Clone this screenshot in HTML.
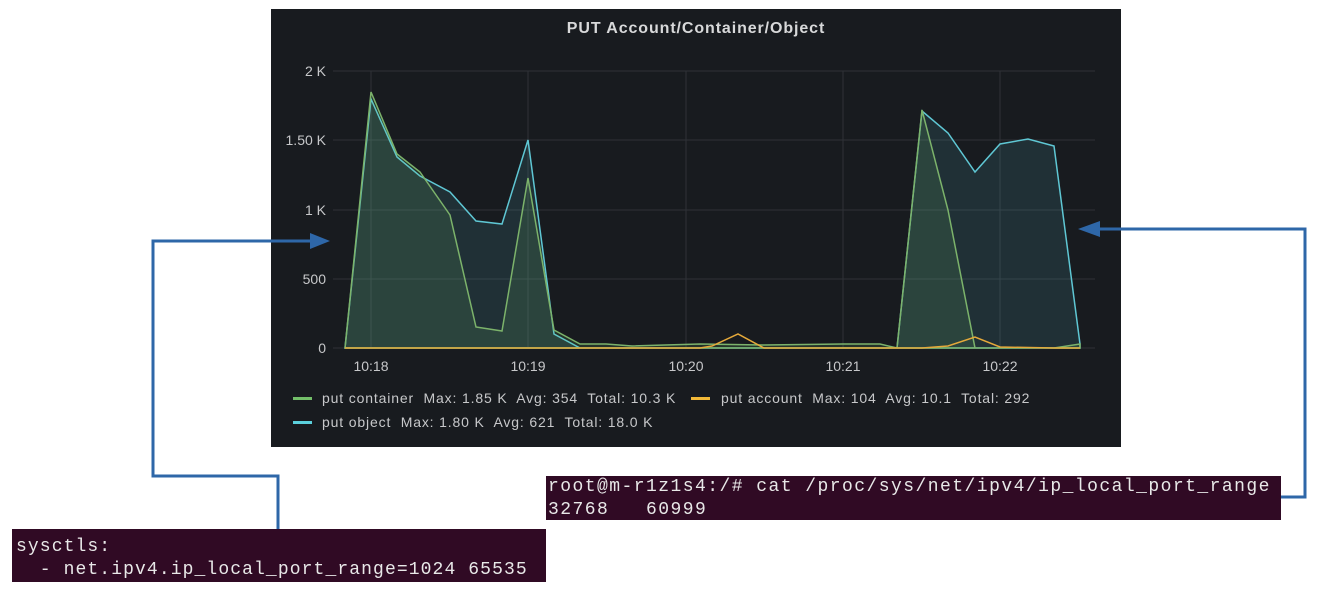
<!DOCTYPE html>
<html><head><meta charset="utf-8"><style>
body{margin:0;width:1326px;height:594px;background:#fff;position:relative;overflow:hidden;font-family:"Liberation Sans",sans-serif}
.term{position:absolute;background:#300a24;color:#e8e8e8;font-family:"Liberation Mono",monospace;font-size:18px;line-height:23px;white-space:pre}
</style></head><body>
<svg width="1326" height="594" style="position:absolute;left:0;top:0">
<rect x="271" y="9" width="850" height="438" fill="#181b1f"/>
<text x="696" y="33" fill="#d8d9da" font-size="16" font-weight="bold" letter-spacing="0.9" text-anchor="middle" font-family="Liberation Sans">PUT Account/Container/Object</text>
<g stroke="#2f3237" stroke-width="1">
<line x1="333" y1="71" x2="1095" y2="71"/><line x1="333" y1="140" x2="1095" y2="140"/><line x1="333" y1="210" x2="1095" y2="210"/><line x1="333" y1="279" x2="1095" y2="279"/><line x1="333" y1="348" x2="1095" y2="348"/>
<line x1="371" y1="71" x2="371" y2="348"/><line x1="528" y1="71" x2="528" y2="348"/><line x1="686" y1="71" x2="686" y2="348"/><line x1="843" y1="71" x2="843" y2="348"/><line x1="1000" y1="71" x2="1000" y2="348"/>
</g>
<g fill="#c7c8ca" font-size="14" text-anchor="end" font-family="Liberation Sans">
<text x="326" y="76">2 K</text><text x="326" y="145">1.50 K</text><text x="326" y="215">1 K</text><text x="326" y="284">500</text><text x="326" y="353">0</text>
</g>
<g fill="#c7c8ca" font-size="14" text-anchor="middle" font-family="Liberation Sans">
<text x="371" y="371">10:18</text><text x="528" y="371">10:19</text><text x="686" y="371">10:20</text><text x="843" y="371">10:21</text><text x="1000" y="371">10:22</text>
</g>
<polygon points="345,348 371,99 397,157 420,176 450,192 476,221 502,224 528,140 554,334 580,348 897,348 922,111 948,133 975,172 1000,144 1028,139 1054,146 1080,344 1080,348" fill="#5bd0dc" fill-opacity="0.12" stroke="#5fc7d4" stroke-width="1.5"/>
<polygon points="345,348 371,92 397,154 420,172 450,215 476,327 502,331 528,178 554,330 580,344 606,344 632,346 700,344 764,345 843,344 880,344 897,348 922,110 948,210 975,348 1054,348 1080,344 1080,348" fill="#73bf69" fill-opacity="0.14" stroke="#7cb36b" stroke-width="1.5"/>
<polyline points="345,348 700,348 712,346 738,334 764,348 897,348 922,348 948,346 975,337 1000,347 1054,348 1080,348" fill="none" stroke="#e5a93a" stroke-width="1.5"/>
<g font-size="14" fill="#c7c8ca" font-family="Liberation Sans" letter-spacing="0.85" style="white-space:pre">
<rect x="293" y="397" width="19" height="3" fill="#73bf69"/>
<text x="322" y="403" xml:space="preserve">put container  Max: 1.85 K  Avg: 354  Total: 10.3 K</text>
<rect x="691" y="397" width="19" height="3" fill="#f2b938"/>
<text x="721" y="403" xml:space="preserve">put account  Max: 104  Avg: 10.1  Total: 292</text>
<rect x="293" y="421" width="19" height="3" fill="#5bd0dc"/>
<text x="322" y="427" xml:space="preserve">put object  Max: 1.80 K  Avg: 621  Total: 18.0 K</text>
</g>
<g stroke="#2e67a8" stroke-width="3" fill="none">
<polyline points="310,241 153,241 153,476 278,476 278,530"/>
<polyline points="1098,229 1305,229 1305,497 1280,497"/>
</g>
<polygon points="330,241 310,233 310,249" fill="#2e67a8"/>
<polygon points="1078,229 1100,221 1100,237" fill="#2e67a8"/>
</svg>
<div class="term" style="left:546px;top:476px;width:733px;height:44px;padding:0 0 0 2px;letter-spacing:1.45px">root@m-r1z1s4:/# cat /proc/sys/net/ipv4/ip_local_port_range
32768   60999</div>
<div class="term" style="left:12px;top:529px;width:534px;height:53px;padding:7px 0 0 4px;box-sizing:border-box;letter-spacing:1.1px">sysctls:
  - net.ipv4.ip_local_port_range=1024 65535</div>
</body></html>
